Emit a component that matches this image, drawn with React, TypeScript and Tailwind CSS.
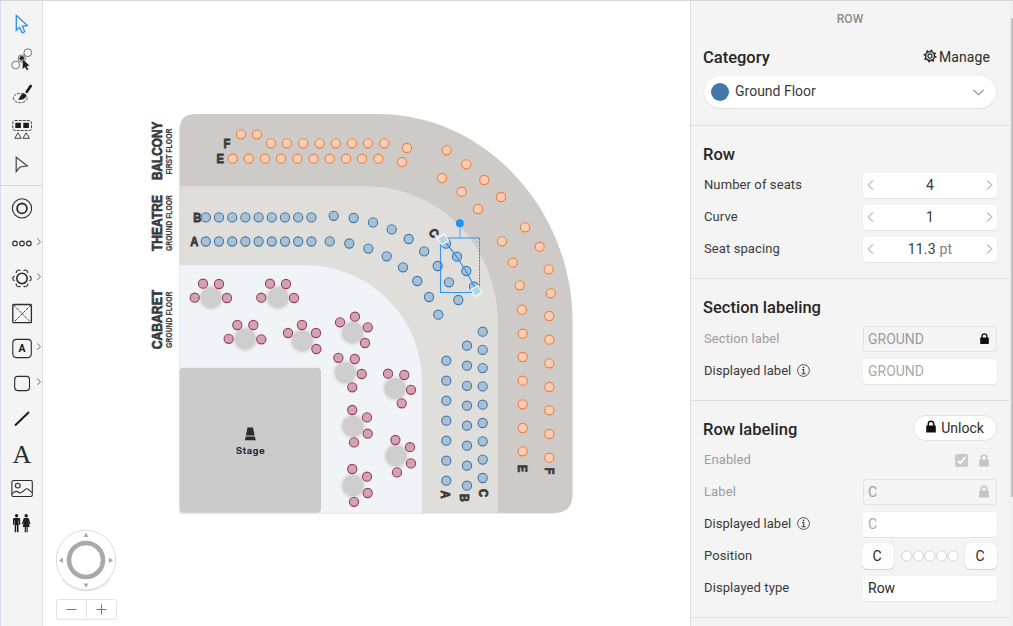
import type { ReactNode } from "react";

type Point = [number, number];

const FIRST_FLOOR: Point[] = [
  [241, 134.3], [257, 134.3], [271, 143.3], [287, 143.3], [303.3, 143.3], [319.6, 143.3], [335.8, 143.3],
  [352, 143.3], [368, 143.3], [384.3, 143.3], [407, 148],
  [232.7, 158.7], [248.8, 158.7], [265, 158.7], [281, 158.7], [297.3, 158.7], [313.6, 158.7], [329.7, 158.7],
  [346, 158.7], [362, 158.7], [378.3, 158.7], [402, 162],
  [446.7, 150.3], [466.3, 164.3], [484.3, 180], [501, 197], [525, 227.3], [539.7, 246.7], [548.7, 269.3],
  [550.7, 293.3], [549.3, 316], [549.3, 339.7], [549.3, 363.3], [549.3, 387], [549.3, 410.3], [549.3, 434],
  [549.3, 457.7],
  [442, 178], [461.7, 191.7], [478, 209], [502, 241.3], [512.7, 262.7], [519.7, 285.3], [522, 309.7],
  [522.7, 333.7], [522.7, 357], [522.7, 380.7], [522.7, 404.3], [522.7, 428], [522.7, 451.3],
];

const straight = [0, 1, 2, 3, 4, 5, 6, 7, 8].map((i) => 205.8 + i * 13.2);

const GROUND_FLOOR: Point[] = [
  ...straight.map((x): Point => [x, 217.4]),
  ...straight.map((x): Point => [x, 241.5]),
  [333.7, 215.8], [353.7, 218], [373, 222.4], [391.7, 229.4], [408.7, 239], [424.2, 251.4], [437.7, 266],
  [449, 282.3], [458.3, 300],
  [329.7, 241.4], [349.3, 243.5], [368.4, 248.6], [386.7, 256.3], [403, 267.3], [417.3, 281], [429, 297],
  [438.3, 314.7],
  [446, 243.7], [457, 256.7], [466.3, 271], [474, 286.7],
  ...[360.7, 380.7, 400.7, 420.7, 440.7, 460.7, 480.7].map((y): Point => [446.3, y]),
  ...[345.7, 365.7, 385.8, 405.7, 425.7, 445.7, 465.7, 485.7].map((y): Point => [467, y]),
  ...[331.7, 349.9, 368.1, 386.4, 404.7, 423, 441.3, 459.6, 478].map((y): Point => [482.7, y]),
];

const TABLES: { at: Point; seats: Point[] }[] = [
  { at: [211, 297.7], seats: [[203, 283.7], [219, 284], [194.7, 297.7], [227, 298]] },
  { at: [278, 297.7], seats: [[270, 283.7], [286, 284], [261.3, 297.7], [294, 298]] },
  { at: [245.2, 339], seats: [[237.3, 325], [253.3, 325], [228.7, 338.8], [261.3, 339.3]] },
  { at: [302.3, 341], seats: [[288, 333], [302, 325], [316, 333], [316.4, 349]] },
  { at: [352.6, 332.7], seats: [[340, 322.3], [355, 316.7], [367.8, 327.3], [365, 343]] },
  { at: [345.4, 372.6], seats: [[338.4, 357.8], [354.8, 359], [361.7, 374], [352.3, 387.3]] },
  { at: [395, 388.6], seats: [[388, 373.7], [404.3, 375], [411, 389.8], [401.7, 403.3]] },
  { at: [353, 426.4], seats: [[352.2, 410], [367, 417.4], [367.7, 433.7], [354, 442.4]] },
  { at: [396.3, 456], seats: [[395.4, 440], [410, 447.2], [411, 463.4], [397, 472.4]] },
  { at: [353, 485.6], seats: [[352.2, 469], [367, 476.7], [367.7, 493], [354, 501.8]] },
];

function Seats({ points, fill, stroke, r = 4.6 }: { points: Point[]; fill: string; stroke: string; r?: number }) {
  return (
    <g fill={fill} stroke={stroke} strokeWidth="1.1">
      {points.map(([x, y]) => (
        <circle key={`${x}-${y}`} cx={x} cy={y} r={r} />
      ))}
    </g>
  );
}

function SideLabel({ x, y, size, length, children }: { x: number; y: number; size: number; length: number; children: string }) {
  return (
    <text
      transform={`translate(${x} ${y}) rotate(-90)`}
      fontSize={size}
      textLength={length}
      lengthAdjust="spacingAndGlyphs"
      stroke="#3a3a3c"
      strokeWidth={size > 10 ? 0.7 : 0.15}
    >
      {children}
    </text>
  );
}

function RowLetter({ x, y, angle = 0, children }: { x: number; y: number; angle?: number; children: string }) {
  return (
    <text transform={`translate(${x} ${y}) rotate(${angle}) scale(0.9 1)`} fontSize="12.500" textAnchor="middle" dy="4.4" stroke="#3a3a3c" strokeWidth="0.8">
      {children}
    </text>
  );
}

function Chart() {
  return (
    <svg className="block h-full w-full" viewBox="43 1 647 625" fontFamily="'Liberation Sans', Arial, sans-serif">
      <path d="M195.500 114H378C484 114 572.500 208 572.500 322V495Q572.500 513 554 513H179.500V130Q179.500 114 195.500 114Z" fill="#cecac7" />
      <path d="M179.500 186.300H365C440 186.300 498 246 498 325V513H179.500Z" fill="#e0deda" />
      <path d="M179.500 265.300H305C370 265.300 422 318 422 382V513H179.500Z" fill="#f0f4f8" />
      <path d="M179.800 513.300H554" stroke="#dcdbd9" strokeWidth="0.8" />
      <rect x="179.500" y="367.700" width="141.500" height="145" rx="4" fill="#cbcbcb" />
      <g fill="#3a3a3c" fontWeight="700">
        <SideLabel x={161.6} y={180} size={14.1} length={58.5}>BALCONY</SideLabel>
        <SideLabel x={172.3} y={174.5} size={8.8} length={46}>FIRST FLOOR</SideLabel>
        <SideLabel x={161.6} y={251} size={14.1} length={56}>THEATRE</SideLabel>
        <SideLabel x={172.3} y={251} size={8.8} length={56}>GROUND FLOOR</SideLabel>
        <SideLabel x={161.6} y={349.3} size={14.1} length={59.5}>CABARET</SideLabel>
        <SideLabel x={172.3} y={348} size={8.8} length={56.5}>GROUND FLOOR</SideLabel>
        <RowLetter x={227} y={144}>F</RowLetter>
        <RowLetter x={220.3} y={158.8}>E</RowLetter>
        <RowLetter x={197.3} y={217.8}>B</RowLetter>
        <RowLetter x={194.3} y={241.8}>A</RowLetter>
        <RowLetter x={434} y={233} angle={55}>C</RowLetter>
        <RowLetter x={445.5} y={494.5} angle={90}>A</RowLetter>
        <RowLetter x={464.8} y={497.8} angle={90}>B</RowLetter>
        <RowLetter x={483.5} y={493} angle={90}>C</RowLetter>
        <RowLetter x={522} y={468.5} angle={90}>E</RowLetter>
        <RowLetter x={549} y={471} angle={90}>F</RowLetter>
      </g>

      <path d="M247.500 427.500h5.500l1.600 8h-8.700Z" fill="#2b2b2b" />
      <path d="M244.800 440.300l1-3.700h9l1 3.700Z" fill="#2b2b2b" />
      <text x="250.200" y="453.800" fontSize="9.800" fontWeight="500" fontFamily="Roboto, sans-serif" textAnchor="middle" fill="#222" stroke="#222" strokeWidth="0.200" textLength="28.500">
        Stage
      </text>

      {TABLES.map(({ at: [x, y], seats }) => (
        <g key={`${x}-${y}`}>
          <circle cx={x} cy={y} r="13" fill="#e6e7e8" />
          <circle cx={x} cy={y} r="10.700" fill="#cecece" />
          <Seats points={seats} fill="#cfa5b3" stroke="#a23a5e" />
        </g>
      ))}
      <Seats points={FIRST_FLOOR} fill="#f6cdb5" stroke="#ee8142" />
      <Seats points={GROUND_FLOOR} fill="#a9bfd3" stroke="#4079aa" />

      <g fill="none" stroke="#3094f2">
        <path d="M479.500 238H440.500V292.500H479.500" strokeWidth="1.100" />
        <path d="M479.500 238.500V292" stroke="#2b7fd4" strokeWidth="1" strokeDasharray="2 1" />
        <path d="M460 223V238" stroke="#66b1f5" strokeWidth="1.200" />
        <path d="M443 239.500Q462 261 476.500 291" strokeWidth="1.200" />
      </g>
      <circle cx="459.800" cy="223.300" r="4" fill="#2492f5" />
      <g fill="#b3d6e6" stroke="#fff" strokeWidth="1">
        <rect x="-4" y="-4" width="8" height="8" transform="translate(443 239.500) rotate(-32)" />
        <rect x="-4" y="-4" width="8" height="8" transform="translate(476.500 291) rotate(-30)" />
      </g>

      <circle cx="86" cy="560" r="29.700" fill="#fff" stroke="#ddd" strokeWidth="1" />
      <path d="M62 579A30 30 0 0 0 110 579" fill="none" stroke="#ccc" strokeWidth="0.700" />
      <circle cx="86" cy="560" r="17.300" fill="#fff" stroke="#a9a9a9" strokeWidth="4" />
      <circle cx="86" cy="560" r="15.200" fill="none" stroke="#888" strokeWidth="0.600" />
      <path d="M83.500 537l2.500-4.300 2.500 4.300ZM83.500 583.500l2.500 4.300 2.500-4.300ZM63 557.700l-4.200 2.600 4.200 2.600ZM109 557.700l4.200 2.600-4.200 2.600Z" fill="#a8a8a8" />
      <rect x="56.500" y="599.500" width="60" height="20" rx="2" fill="#fff" stroke="#e2e2e2" />
      <path d="M86.500 599.500v20" stroke="#e2e2e2" />
      <path d="M66.500 609.500h10M96.500 609.500h10M101.500 604.500v10" stroke="#777" strokeWidth="1.100" />
    </svg>
  );
}

function Tool({ top, menu, children }: { top: number; menu?: boolean; children: ReactNode }) {
  return (
    <button className="h-[35px] w-[41px] shrink-0">
      <svg className="block h-[35px] w-[41px]" viewBox={`1 ${top} 41 35`} fill="none" stroke="#2b2b2b" strokeWidth="1.1">
        {children}
        {menu && <path d={`M37.300 ${top + 12.5}l3.200 3.200-3.200 3.200`} stroke="#555" strokeWidth="0.9" />}
      </svg>
    </button>
  );
}

const PETALS = [0, 60, 120, 180, 240, 300];

function Toolbar() {
  return (
    <aside className="flex w-[43px] shrink-0 flex-col border-r border-l border-r-[#dedede] border-l-[#d3deee] bg-[#f4f4f4]">
      <div className="flex flex-col border-b border-[#d6d6d6] pt-[6px] pb-[3px]">
        <Tool top={7}>
          <path d="M16.300 15.500V30.300L19.500 27.300L22.200 32.800L24.800 31.600L22.400 26.300L27.400 25.500Z" stroke="#2c90ee" strokeWidth="1.300" />
        </Tool>
        <Tool top={42}>
          <circle cx="27.800" cy="52.700" r="3.900" stroke="#777" strokeWidth="1" />
          <circle cx="15.700" cy="65" r="3.900" stroke="#777" strokeWidth="1" />
          <circle cx="21.800" cy="58.500" r="3.700" stroke="#777" fill="#eee" strokeWidth="1" />
          <circle cx="21.800" cy="58.300" r="2.400" fill="#222" stroke="none" />
          <path d="M22.500 59V69.300L25 67.300L26.800 70.600L28.600 69.500L26.800 66.300L29.800 65.700Z" fill="#1d1d1d" stroke="#f4f4f4" strokeWidth="0.400" />
        </Tool>
        <Tool top={77}>
          <ellipse cx="20.300" cy="98" rx="6.900" ry="4.700" stroke="#444" strokeWidth="0.900" strokeDasharray="3 1" />
          <path d="M30.700 86L26.800 91.800" stroke="#1d1d1d" strokeWidth="2.700" strokeLinecap="round" />
          <path d="M18 99.300C20 98.500 20 94.600 23.300 93.500C25.500 93.600 26.800 95 26 96.500C24.500 99.600 20.500 100.500 18 99.300Z" fill="#1d1d1d" stroke="none" />
        </Tool>
        <Tool top={112}>
          <rect x="12.800" y="120.500" width="18.600" height="10" rx="2" stroke="#333" strokeWidth="0.900" strokeDasharray="3 1" />
          <path d="M15.300 122.800h5.600v5.300h-5.600ZM23.300 122.800h5.600v5.300h-5.600Z" fill="#1d1d1d" stroke="none" />
          <path d="M18 132.800l3.200 5.500h-6.400ZM26.200 132.800l3.200 5.500H23Z" stroke="#444" strokeWidth="1" />
        </Tool>
        <Tool top={147}>
          <path d="M16.200 157.300V171.500L20 167L27.300 165.800Z" stroke="#444" strokeWidth="1.200" />
        </Tool>
      </div>
      <div className="flex flex-col pt-[5px]">
        <Tool top={191}>
          <circle cx="22" cy="208.400" r="9.600" />
          <circle cx="22" cy="208.400" r="4.900" strokeWidth="1.800" />
        </Tool>
        <Tool top={226} menu>
          <circle cx="15" cy="243.400" r="2.300" />
          <circle cx="22" cy="243.400" r="2.300" />
          <circle cx="28.900" cy="243.400" r="2.300" />
        </Tool>
        <Tool top={261} menu>
          <circle cx="22" cy="278.400" r="5.200" strokeWidth="1.600" />
          {PETALS.map((angle) => (
            <path key={angle} d="M29.400 276A2.500 2.500 0 0 1 29.400 280.800" transform={`rotate(${angle} 22 278.400)`} strokeWidth="1.100" />
          ))}
        </Tool>
        <Tool top={296}>
          <rect x="12.800" y="304.500" width="18.600" height="18.200" rx="1" strokeWidth="1.300" />
          <path d="M13.500 305L31 322.500M31 305L13.500 322.500" strokeWidth="0.900" strokeDasharray="3 1" />
        </Tool>
        <Tool top={331} menu>
          <rect x="12.800" y="339.400" width="18.500" height="18.200" rx="3.500" />
          <text x="22" y="352.200" fontSize="10.500" fontWeight="700" fontFamily="Roboto, sans-serif" textAnchor="middle" fill="#1d1d1d" stroke="none">A</text>
        </Tool>
        <Tool top={366} menu>
          <rect x="14.700" y="376.400" width="14.800" height="14.200" rx="3" />
        </Tool>
        <Tool top={401}>
          <path d="M15 425.500L29 412" stroke="#1d1d1d" strokeWidth="2" />
        </Tool>
        <Tool top={436}>
          <text x="22" y="462.800" fontSize="26" fontFamily="'Liberation Serif', serif" textAnchor="middle" fill="#2b2b2b" stroke="none">A</text>
        </Tool>
        <Tool top={471}>
          <rect x="11.900" y="480.500" width="20.400" height="16" rx="1.500" />
          <circle cx="17.800" cy="485.600" r="2.400" />
          <path d="M12 494C15 490.500 17 491 18.800 492.500C20.500 493.800 21 492 22.300 491.700C24 491.600 24.500 488.800 26.800 488.800C29 488.800 30 491.500 32.300 492.500" />
        </Tool>
        <Tool top={506}>
          <g fill="#1d1d1d" stroke="none">
            <circle cx="16.600" cy="515.700" r="1.700" />
            <path d="M14.300 518h4.600q1.300 0 1.300 1.300v5.400h-1.300v-4.500h-.4v12h-1.500v-7h-.8v7h-1.500v-12h-.4v4.500H13v-5.400q0-1.300 1.300-1.300Z" />
            <circle cx="26.200" cy="515.700" r="1.700" />
            <path d="M24.600 518h3.200q.9 0 1.200 1l1.500 4.900-1.200.4-1.300-4 1.700 6.700h-2v5.200h-1.200V527h-.6v5.200h-1.200V527h-2l1.700-6.700-1.300 4-1.200-.4 1.500-4.900q.3-1 1.200-1Z" />
          </g>
        </Tool>
      </div>
    </aside>
  );
}

function Lock({ className }: { className: string }) {
  return (
    <svg className={className} viewBox="0 0 10 12" fill="none">
      <path d="M2.300 6V3.500a2.700 2.700 0 0 1 5.400 0V6" stroke="currentColor" strokeWidth="1.500" />
      <rect x="0.200" y="5" width="9.600" height="7" rx="0.500" fill="currentColor" />
    </svg>
  );
}

function Gear() {
  return (
    <svg className="h-[14px] w-[14px]" viewBox="0 0 14 14" fill="none" stroke="#222">
      <circle cx="7" cy="7" r="4.500" strokeWidth="1.400" />
      <circle cx="7" cy="7" r="2.100" strokeWidth="1.100" />
      <circle cx="7" cy="7" r="5.700" strokeWidth="1.500" strokeDasharray="1.700 2.777" />
    </svg>
  );
}

function Info() {
  return (
    <svg className="-mt-px ml-[6px] h-[13px] w-[13px]" viewBox="0 0 13 13" fill="none" stroke="#444">
      <circle cx="6.500" cy="6.500" r="5.900" strokeWidth="0.900" />
      <path d="M5 5.500h1.700v4M4.600 9.700h4" strokeWidth="1.100" />
      <circle cx="6.500" cy="3.400" r="0.800" fill="#333" stroke="none" />
    </svg>
  );
}

function Arrow({ flip }: { flip?: boolean }) {
  return (
    <svg className="h-[10px] w-[7px]" viewBox="0 0 7 10" fill="none" stroke="#bbb" strokeWidth="1.1">
      <path d={flip ? "M1 0.500L6 5L1 9.500" : "M6 0.500L1 5L6 9.500"} />
    </svg>
  );
}

function Field({ label, info, muted, children }: { label: string; info?: boolean; muted?: boolean; children: ReactNode }) {
  return (
    <div className="flex h-8 items-center justify-between">
      <div className={`flex items-center ${muted ? "text-[#9c9c9c]" : "text-[#3a3a3a]"}`}>
        <span className={info ? "text-[13px] leading-4 tracking-[0.02px]" : "text-[13px] leading-4 tracking-[0.1px]"}>{label}</span>
        {info && <Info />}
      </div>
      {children}
    </div>
  );
}

const BOX = "flex h-[25px] w-[134px] items-center rounded-[3px] bg-white pb-px text-sm shadow-[0_0_1px_rgba(0,0,0,0.12),0_1px_1px_rgba(0,0,0,0.06)]";
const LOCKED = "flex h-[26px] w-[134px] items-center justify-between rounded-[3px] border border-[#e2e2e2] pr-[7px] pb-px pl-[4px] text-sm text-[#9c9c9c]";

function Stepper({ value, unit }: { value: string; unit?: string }) {
  return (
    <div className={`${BOX} justify-between pr-[4px] pl-[4px]`}>
      <Arrow />
      <span className="tracking-[0.2px] text-[#3a3a3a]">
        {value}
        {unit && <span className="text-[#808080]"> {unit}</span>}
      </span>
      <Arrow flip />
    </div>
  );
}

function Title({ children }: { children: string }) {
  return <h2 className="translate-y-px text-[16.500px] leading-5 font-medium text-[#262626]">{children}</h2>;
}

function PositionButton() {
  return (
    <button className="h-[26px] w-8 rounded-[5px] bg-[#fdfdfd] pr-[2px] text-sm text-[#2b2b2b] shadow-[0_0_1px_rgba(0,0,0,0.25),0_1px_1px_rgba(0,0,0,0.12)]">C</button>
  );
}

function Panel() {
  return (
    <aside className="flex w-[323px] shrink-0 border-l border-[#dedede] bg-[#f4f4f4]">
      <div className="w-[318px] shrink-0">
        <div className="flex h-[35px] items-center justify-center text-xs font-medium tracking-[0.1px] text-[#8a8a8a]">ROW</div>

        <section className="h-[90px] border-b border-[#dedede] pt-[11px] pr-3 pl-3">
          <div className="flex items-center justify-between pr-[7px]">
            <Title>Category</Title>
            <div className="-mt-[2px] flex items-center gap-[2px] text-sm leading-5 text-[#2b2b2b]">
              <Gear />
              <span className="pt-px tracking-[0.1px]">Manage</span>
            </div>
          </div>
          <div className="mt-[9px] ml-[1px] flex h-8 w-[292px] items-center rounded-full bg-white pr-[12px] pl-[7px] shadow-[0_0_1px_rgba(0,0,0,0.15),0_1px_1px_rgba(0,0,0,0.06)]">
            <span className="h-[18px] w-[18px] rounded-full bg-[#4277a8]" />
            <span className="ml-[6px] flex-1 pb-[2px] text-sm text-[#3a3a3a]">Ground Floor</span>
            <svg className="h-[7px] w-[11px]" viewBox="0 0 11 7" fill="none" stroke="#888" strokeWidth="1.1">
              <path d="M0.500 0.800L5.500 5.800L10.500 0.800" />
            </svg>
          </div>
        </section>

        <section className="h-[153px] border-b border-[#dedede] pt-[18px] pr-3 pl-[13px]">
          <div className="-ml-px h-[25px]"><Title>Row</Title></div>
          <Field label="Number of seats"><Stepper value="4" /></Field>
          <Field label="Curve"><Stepper value="1" /></Field>
          <Field label="Seat spacing"><Stepper value="11.3" unit="pt" /></Field>
        </section>

        <section className="h-[122px] border-b border-[#dedede] pt-[18px] pr-3 pl-[13px]">
          <div className="-ml-px h-[26px]"><Title>Section labeling</Title></div>
          <Field label="Section label" muted>
            <div className={LOCKED}>
              <span>GROUND</span>
              <Lock className="h-[11px] w-[9px] text-[#111]" />
            </div>
          </Field>
          <Field label="Displayed label" info>
            <div className={`${BOX} px-[5px] text-[#aaa]`}>GROUND</div>
          </Field>
        </section>

        <section className="h-[217px] border-b border-[#dedede] pt-[14px] pr-3 pl-[13px]">
          <div className="-ml-px flex h-[29px] items-start justify-between">
            <div className="pt-[4px]"><Title>Row labeling</Title></div>
            <button className="flex h-[26px] w-[84px] items-center justify-center gap-[5px] rounded-full border border-[#e2e2e2] bg-white text-sm text-[#2b2b2b]">
              <Lock className="-mt-[3px] h-[13px] w-[10px] text-[#111]" />
              Unlock
            </button>
          </div>
          <Field label="Enabled" muted>
            <div className="flex items-center gap-[11px] pr-[8px]">
              <span className="flex h-[13px] w-[13px] items-center justify-center rounded-[2px] bg-[#c9c9c9]">
                <svg className="h-[9px] w-[9px]" viewBox="0 0 9 9" fill="none" stroke="#fff" strokeWidth="1.7">
                  <path d="M0.800 4.800L3.200 7.200L8.300 1.300" />
                </svg>
              </span>
              <Lock className="h-[13px] w-[10px] text-[#c4c4c4]" />
            </div>
          </Field>
          <Field label="Label" muted>
            <div className={LOCKED}>
              <span>C</span>
              <Lock className="h-[13px] w-[10px] text-[#c4c4c4]" />
            </div>
          </Field>
          <Field label="Displayed label" info>
            <div className={`${BOX} px-[5px] text-[#aaa]`}>C</div>
          </Field>
          <Field label="Position">
            <div className="flex w-[135px] items-center justify-between">
              <PositionButton />
              <svg className="h-3 w-[58px]" viewBox="0 0 58 12" fill="#fff" stroke="#d3d3d3">
                {[5.8, 17.4, 29, 40.6, 52.2].map((x) => <circle key={x} cx={x} cy="6" r="5.100" />)}
              </svg>
              <PositionButton />
            </div>
          </Field>
          <Field label="Displayed type">
            <div className={`${BOX} px-[5px] text-[#2b2b2b]`}>Row</div>
          </Field>
        </section>
      </div>
      <div className="flex w-1 shrink-0 justify-end bg-[#f0f0f0] pt-[17px]">
        <div className="h-[479px] w-[2px] bg-[#c1c1c1]" />
      </div>
    </aside>
  );
}

export default function App() {
  return (
    <div className="flex h-[626px] w-[1013px] overflow-hidden border-t border-[#d6d6d6] bg-white font-[Roboto,sans-serif]">
      <Toolbar />
      <main className="min-w-0 flex-1"><Chart /></main>
      <Panel />
    </div>
  );
}
